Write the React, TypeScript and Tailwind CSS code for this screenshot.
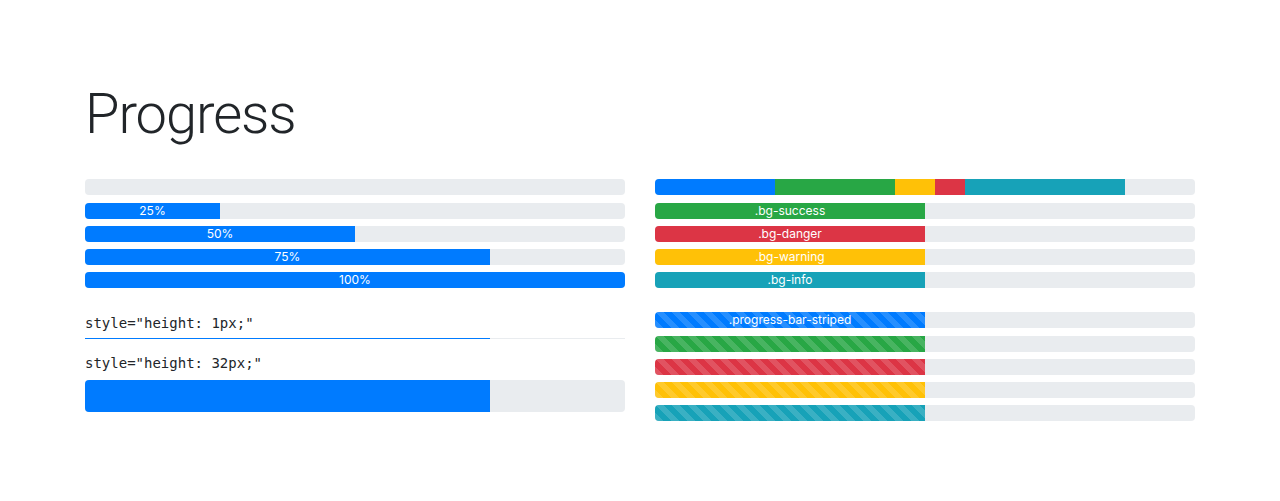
import React from "react";

const stripe =
  "bg-[linear-gradient(45deg,rgba(255,255,255,.15)_25%,transparent_25%,transparent_50%,rgba(255,255,255,.15)_50%,rgba(255,255,255,.15)_75%,transparent_75%,transparent)] bg-[length:16px_16px]";

function Track({ children, className = "" }: { children?: React.ReactNode; className?: string }) {
  return (
    <div className={`flex h-[16px] w-full overflow-hidden rounded-[4px] bg-[#e9ecef] ${className}`}>
      {children}
    </div>
  );
}

function Fill({
  width,
  color,
  label,
  striped,
}: {
  width: string;
  color: string;
  label?: string;
  striped?: boolean;
}) {
  return (
    <div
      className={`flex h-full items-center justify-center overflow-hidden whitespace-nowrap text-[12px] leading-none text-white ${color} ${striped ? stripe : ""}`}
      style={{ width }}
    >
      {label}
    </div>
  );
}

const mono = "font-['DejaVu_Sans_Mono',monospace]";

export default function App() {
  return (
    <div className="h-[501px] w-[1280px] bg-white font-['Inter','Noto_Sans',sans-serif] text-[#212529]">
      <div className="mx-auto w-[1110px] pt-[81px]">
        <h1 className="font-['Roboto','Inter',sans-serif] text-[56px] font-light leading-[67px] tracking-[-1.1px]">Progress</h1>
        <div className="mt-[31px] grid grid-cols-2 gap-[30px]">
          {/* left column */}
          <div className="flex flex-col">
            <Track />
            <Track className="mt-[8px]">
              <Fill width="25%" color="bg-[#007bff]" label="25%" />
            </Track>
            <Track className="mt-[7px]">
              <Fill width="50%" color="bg-[#007bff]" label="50%" />
            </Track>
            <Track className="mt-[7px]">
              <Fill width="75%" color="bg-[#007bff]" label="75%" />
            </Track>
            <Track className="mt-[7px]">
              <Fill width="100%" color="bg-[#007bff]" label="100%" />
            </Track>

            <div className={`mt-[25px] h-[20px] text-[14px] leading-[20px] ${mono}`}>style="height: 1px;"</div>
            <div className="mt-[5px] flex h-[1px] w-full bg-[#e9ecef]">
              <div className="h-full w-[75%] bg-[#007bff]" />
            </div>
            <div className={`mt-[14px] h-[20px] text-[14px] leading-[20px] ${mono}`}>style="height: 32px;"</div>
            <div className="mt-[7px] flex h-[32px] w-full overflow-hidden rounded-[4px] bg-[#e9ecef]">
              <div className="h-full w-[75%] bg-[#007bff]" />
            </div>
          </div>

          {/* right column */}
          <div className="flex flex-col">
            <Track>
              <div className="h-full w-[120px] bg-[#007bff]" />
              <div className="h-full w-[120px] bg-[#28a745]" />
              <div className="h-full w-[40px] bg-[#ffc107]" />
              <div className="h-full w-[30px] bg-[#dc3545]" />
              <div className="h-full w-[160px] bg-[#17a2b8]" />
            </Track>
            <Track className="mt-[8px]">
              <Fill width="50%" color="bg-[#28a745]" label=".bg-success" />
            </Track>
            <Track className="mt-[7px]">
              <Fill width="50%" color="bg-[#dc3545]" label=".bg-danger" />
            </Track>
            <Track className="mt-[7px]">
              <Fill width="50%" color="bg-[#ffc107]" label=".bg-warning" />
            </Track>
            <Track className="mt-[7px]">
              <Fill width="50%" color="bg-[#17a2b8]" label=".bg-info" />
            </Track>

            <Track className="mt-[24px]">
              <Fill width="50%" color="bg-[#007bff]" label=".progress-bar-striped" striped />
            </Track>
            <Track className="mt-[8px]">
              <Fill width="50%" color="bg-[#28a745]" striped />
            </Track>
            <Track className="mt-[7px]">
              <Fill width="50%" color="bg-[#dc3545]" striped />
            </Track>
            <Track className="mt-[7px]">
              <Fill width="50%" color="bg-[#ffc107]" striped />
            </Track>
            <Track className="mt-[7px]">
              <Fill width="50%" color="bg-[#17a2b8]" striped />
            </Track>
          </div>
        </div>
      </div>
    </div>
  );
}
